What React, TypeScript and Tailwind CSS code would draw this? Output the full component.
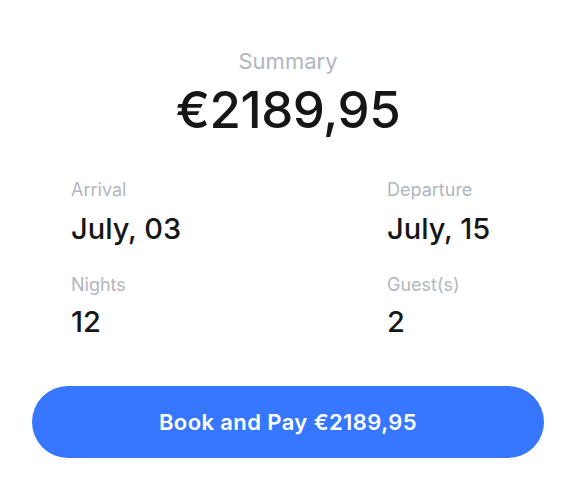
export default function App() {
  return (
    <div className="w-[576px] h-[489px] bg-white font-['Inter',sans-serif] flex flex-col items-center pt-[46px]">
      <p className="text-[22px] leading-[30px] text-[#b3b6be]">Summary</p>
      <p className="text-[51px] leading-[60px] font-medium text-[#161616] tracking-[-0.5px] mt-[4px]">
        €2189,95
      </p>

      <div className="w-full pl-[71px] grid grid-cols-[316px_1fr] mt-[38px]">
        <div>
          <p className="text-[18px] leading-[24px] text-[#b3b6be]">Arrival</p>
          <p className="text-[29px] leading-[38px] font-medium text-[#161616] mt-[8px]">July, 03</p>
        </div>
        <div>
          <p className="text-[18px] leading-[24px] text-[#b3b6be]">Departure</p>
          <p className="text-[29px] leading-[38px] font-medium text-[#161616] mt-[8px]">July, 15</p>
        </div>
        <div className="mt-[25px]">
          <p className="text-[18px] leading-[24px] text-[#b3b6be]">Nights</p>
          <p className="text-[29px] leading-[38px] font-medium text-[#161616] mt-[6px]">12</p>
        </div>
        <div className="mt-[25px]">
          <p className="text-[18px] leading-[24px] text-[#b3b6be]">Guest(s)</p>
          <p className="text-[29px] leading-[38px] font-medium text-[#161616] mt-[6px]">2</p>
        </div>
      </div>

      <div className="w-full px-8 mt-[45px]">
        <button className="w-full h-[72px] rounded-full bg-[#3777ff] text-white text-[22px] font-semibold tracking-[0.4px]">
          Book and Pay €2189,95
        </button>
      </div>
    </div>
  );
}
